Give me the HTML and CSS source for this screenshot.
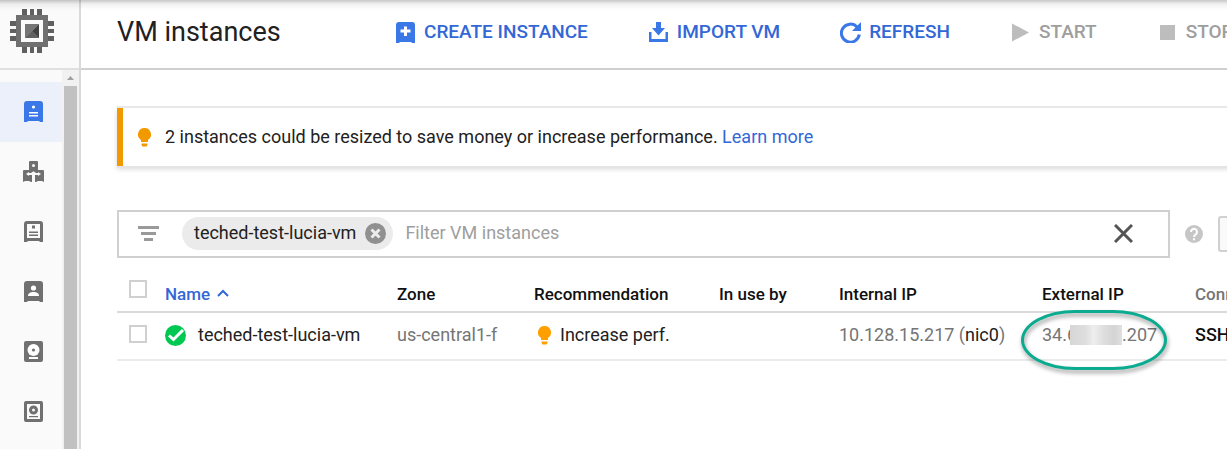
FILE: index.html
```html
<!DOCTYPE html>
<html lang="en">
<head>
<meta charset="utf-8">
<title>VM instances</title>
<link rel="stylesheet" href="styles.css">
</head>
<body>
<div class="app">
  <aside class="sidebar">
    <div class="product">
      <svg width="44" height="44" viewBox="0 0 44 44" shape-rendering="crispEdges">
        <path fill="#606060" d="M12 0h5v6h-5zM20 0h4v6h-4zM27 0h5v6h-5zM12 38h5v6h-5zM20 38h4v6h-4zM27 38h5v6h-5zM0 12h6v5H0zM0 20h6v4H0zM0 27h6v5H0zM38 12h6v5h-6zM38 20h6v4h-6zM38 27h6v5h-6z"/>
        <path fill="#707070" fill-rule="evenodd" d="M6 6h32v32H6zM11 11v22h22V11z"/>
        <path fill="#757575" d="M15 15h14v14H15z"/>
        <path fill="#606060" d="M29 15L15 29h14z"/>
        <path fill="#424242" d="M29 15l-7 7 7 7z"/>
      </svg>
    </div>
    <div class="side-body">
      <nav class="nav" aria-label="Compute Engine">
        <a class="nav-item active" href="#" aria-label="VM instances">
          <svg width="19" height="21" viewBox="0 0 19 21"><path fill="currentColor" d="M3 0h13a3 3 0 0 1 3 3v18h-3l-1-1H4l-1 1H0V3a3 3 0 0 1 3-3z"/><circle cx="9.500" cy="6" r="1.600" fill="#fff"/><path fill="#fff" d="M5 11h9v1.500H5zM5 14h9v1.500H5z"/></svg>
        </a>
        <a class="nav-item" href="#" aria-label="Instance groups">
          <svg width="21" height="21" viewBox="0 0 21 21"><path fill="currentColor" d="M7 0h7a1 1 0 0 1 1 1v8h5a1 1 0 0 1 1 1v11l-2-1h-4l-2 1H8l-2-1H2l-2 1V10a1 1 0 0 1 1-1h5V1a1 1 0 0 1 1-1z"/><circle cx="10.500" cy="4.500" r="1.500" fill="#fafafa"/><path fill="#fafafa" d="M0 8h5v1H0zM16 8h5v1h-5zM3 13l3-2v1h2l2-1.500h1l2 1.500h2v-1l3 2-3 2v-1h-3V21H9v-7H6v1z"/></svg>
        </a>
        <a class="nav-item" href="#" aria-label="Instance templates">
          <svg width="19" height="21" viewBox="0 0 19 21"><path fill="currentColor" fill-rule="evenodd" d="M3 0h13a3 3 0 0 1 3 3v18h-3l-1-1H4l-1 1H0V3a3 3 0 0 1 3-3zM3 3v14h13V3z"/><path fill="currentColor" d="M8 4.500h3v3H8zM5 10.500h9V12H5zM5 13.500h9V15H5z"/></svg>
        </a>
        <a class="nav-item" href="#" aria-label="Sole-tenant nodes">
          <svg width="19" height="21" viewBox="0 0 19 21"><path fill="currentColor" d="M3 0h13a3 3 0 0 1 3 3v18h-3l-1-1H4l-1 1H0V3a3 3 0 0 1 3-3z"/><circle cx="9.500" cy="7" r="2.600" fill="#fff"/><path fill="#fff" d="M4 15c0-3 2.500-4 5.500-4s5.500 1 5.500 4z"/></svg>
        </a>
        <a class="nav-item" href="#" aria-label="Machine images">
          <svg width="19" height="21" viewBox="0 0 19 21"><rect width="19" height="21" rx="2" fill="currentColor"/><circle cx="9.500" cy="9" r="6" fill="#fff"/><circle cx="9.500" cy="9" r="1.600" fill="currentColor"/><path fill="#fff" d="M5 16h9v2H5z"/></svg>
        </a>
        <a class="nav-item" href="#" aria-label="Disks">
          <svg width="19" height="21" viewBox="0 0 19 21"><path fill="currentColor" fill-rule="evenodd" d="M2 0h15a2 2 0 0 1 2 2v17a2 2 0 0 1-2 2H2a2 2 0 0 1-2-2V2a2 2 0 0 1 2-2zM3 3v15h13V3z"/><circle cx="9.500" cy="9" r="3" fill="none" stroke="currentColor" stroke-width="3"/><path fill="currentColor" d="M5 15h9v1.200H5z"/></svg>
        </a>
      </nav>
      <div class="scrollbar">
        <svg width="17" height="16" viewBox="0 0 17 16"><path fill="#a0a0a0" d="M8.500 6L12 10H5z"/></svg>
        <div class="thumb"></div>
      </div>
    </div>
  </aside>

  <main class="main">
    <header class="topbar">
      <h1 class="title">VM instances</h1>
      <div class="actions">
        <button class="action" type="button">
          <svg width="21" height="21" viewBox="0 0 21 21"><path fill="#3b78e7" d="M4 0h13a3 3 0 0 1 3 3v18h-3l-1-1H5l-1 1H1V3a3 3 0 0 1 3-3z"/><path fill="#fff" d="M9 4.500h3v3h3.500v3H12v3.500H9v-3.500H5.500v-3H9z"/></svg>
          CREATE INSTANCE
        </button>
        <button class="action" type="button">
          <svg width="21" height="21" viewBox="0 0 21 21"><path fill="#3b78e7" d="M8 0h5v6h4l-6.500 7.500L4 6h4zM1 10h2.500v7h14v-7H20v10H1z"/></svg>
          IMPORT VM
        </button>
        <button class="action" type="button">
          <svg width="21" height="21" viewBox="0 0 21 21"><path fill="none" stroke="#3b78e7" stroke-width="3" d="M17 5A9 9 0 1 0 19.300 12.500"/><path fill="#3b78e7" d="M21 0v9h-9z"/></svg>
          REFRESH
        </button>
        <button class="action" type="button" disabled>
          <svg width="21" height="21" viewBox="0 0 21 21"><path fill="#bdbdbd" d="M2 1.500l17 9-17 9z"/></svg>
          START
        </button>
        <button class="action" type="button" disabled>
          <svg width="21" height="21" viewBox="0 0 21 21"><path fill="#bdbdbd" d="M3 3h15v15H3z"/></svg>
          STOP
        </button>
      </div>
    </header>

    <div class="content">
      <section class="banner">
        <svg width="13" height="19" viewBox="0 0 13 19"><path fill="#f29900" d="M6.500 0A6.500 6.500 0 0 1 10 12v2H3v-2A6.500 6.500 0 0 1 6.500 0zM3.500 15.500h6V17l-1 1.500h-4l-1-1.500z"/></svg>
        <p>2 instances could be resized to save money or increase performance. <a href="#">Learn more</a></p>
      </section>

      <div class="filter-row">
        <div class="filter">
          <svg class="filter-icon" width="21" height="15" viewBox="0 0 21 15"><path fill="#9a9a9a" d="M0 0h21v3H0zM3 6h15v3H3zM6 12h9v3H6z"/></svg>
          <span class="chip">teched-test-lucia-vm
            <button class="plain" type="button" aria-label="Remove filter">
              <svg width="21" height="21" viewBox="0 0 21 21"><circle cx="10.500" cy="10.500" r="10.500" fill="#909090"/><path stroke="#ececec" stroke-width="3" d="M6.500 6.500l8 8M14.500 6.500l-8 8"/></svg>
            </button>
          </span>
          <input class="filter-input" type="text" placeholder="Filter VM instances" aria-label="Filter VM instances">
          <button class="plain" type="button" aria-label="Clear filters">
            <svg width="19" height="19" viewBox="0 0 19 19"><path stroke="#555" stroke-width="3" d="M1 1l17 17M18 1L1 18"/></svg>
          </button>
        </div>
        <button class="plain" type="button" aria-label="Help">
          <svg width="18" height="18" viewBox="0 0 18 18"><circle cx="9" cy="9" r="9" fill="#c6c6c6"/><path fill="none" stroke="#fff" stroke-width="2" d="M6 7a3 3 0 1 1 4.800 2.300C9.500 10.200 9 10.700 9 12"/><path fill="#fff" d="M8 13.200h2v2H8z"/></svg>
        </button>
        <button class="columns" type="button" aria-label="Columns"></button>
      </div>

      <table class="vms">
        <colgroup><col class="c-check"><col class="c-name"><col class="c-zone"><col class="c-rec"><col class="c-use"><col class="c-int"><col class="c-ext"><col></colgroup>
        <thead>
          <tr>
            <th class="check"><input type="checkbox" aria-label="Select all instances"></th>
            <th class="sorted">Name <svg width="12" height="8" viewBox="0 0 12 8"><path fill="none" stroke="#3367d6" stroke-width="2" d="M1 7l5-5 5 5"/></svg></th>
            <th>Zone</th>
            <th>Recommendation</th>
            <th>In use by</th>
            <th>Internal IP</th>
            <th>External IP</th>
            <th class="muted">Connect</th>
          </tr>
        </thead>
        <tbody>
          <tr>
            <td class="check"><input type="checkbox" aria-label="Select teched-test-lucia-vm"></td>
            <td>
              <div class="name">
                <svg width="21" height="21" viewBox="0 0 21 21"><circle cx="10.500" cy="10.500" r="10.500" fill="#00c853"/><path fill="none" stroke="#fff" stroke-width="3" d="M4 10.500l4.500 4L18 5"/></svg>
                <a href="#">teched-test-lucia-vm</a>
              </div>
            </td>
            <td class="muted">us-central1-f</td>
            <td>
              <div class="rec">
                <svg width="13" height="19" viewBox="0 0 13 19"><path fill="#ffa000" d="M6.500 0A6.500 6.500 0 0 1 10 12v2H3v-2A6.500 6.500 0 0 1 6.500 0zM3.500 15.500h6V17l-1 1.500h-4l-1-1.500z"/></svg>
                <a href="#">Increase perf.</a>
              </div>
            </td>
            <td></td>
            <td class="muted">10.128.15.217 (<a href="#">nic0</a>)</td>
            <td class="external muted"><div class="ip">34.6<span class="redaction"></span>.207</div><div class="ring"></div></td>
            <td class="ssh">SSH</td>
          </tr>
        </tbody>
      </table>
    </div>
  </main>
</div>
</body>
</html>
```

FILE: styles.css
```css
* { box-sizing: border-box; }
body {
  margin: 0;
  background: #fff;
  color: #212121;
  font: 18px/24px Roboto, "Liberation Sans", sans-serif;
}
svg { display: block; flex: none; }
button, input { font: inherit; }
a { color: inherit; text-decoration: none; }

.app {
  position: relative;
  display: flex;
  height: 100vh;
  overflow: hidden;
}
.app::before {
  content: "";
  position: absolute;
  inset: 0 0 auto;
  height: 10px;
  background: linear-gradient(rgba(0, 0, 0, .22), rgba(0, 0, 0, .06) 40%, transparent);
}

/* Sidebar */
.sidebar {
  flex: none;
  width: 81px;
  display: flex;
  flex-direction: column;
  background: #fafafa;
  border-right: 2px solid #d9d9d9;
}
.product {
  height: 70px;
  padding: 9px 10px;
  border-bottom: 2px solid #e0e0e0;
}
.side-body { flex: 1; display: flex; min-height: 0; }
.nav { flex: 1; padding-top: 12px; }
.nav-item {
  display: flex;
  align-items: center;
  justify-content: center;
  height: 60px;
  padding: 0 0 2px 5px;
  color: #707070;
}
.nav-item.active { background: #ecf0fa; color: #3b78e7; }
.scrollbar {
  width: 17px;
  display: flex;
  flex-direction: column;
  background: #f1f1f1;
}
.thumb { flex: 1; margin: 0 2px; background: #c1c1c1; }

/* Header */
.main { flex: 1; min-width: 0; overflow: hidden; }
.topbar {
  display: flex;
  align-items: center;
  height: 70px;
  padding: 0 0 4px 36px;
  border-bottom: 2px solid #d0d0d0;
}
.title {
  flex: none;
  width: 278px;
  margin: 0;
  font-size: 27px;
  line-height: 32px;
  font-weight: 400;
}
.actions { display: flex; gap: 60px; }
.action {
  display: flex;
  align-items: center;
  gap: 8px;
  padding: 0;
  border: 0;
  background: none;
  color: #3367d6;
  font-size: 19px;
  font-weight: 500;
  white-space: nowrap;
}
.action:disabled { color: #9e9e9e; }

/* Content runs on past the right edge of the pane */
.content { padding-left: 36px; margin-right: -60px; }
.banner {
  display: flex;
  align-items: center;
  gap: 14px;
  height: 58px;
  margin: 38px 0 44px;
  padding-left: 15px;
  border-left: 6px solid #f29900;
  box-shadow: 0 -2px 0 #e8e8e8, 0 2px 0 #e4e4e4, 0 3px 5px rgba(0, 0, 0, .16);
}
.banner p { margin: 0; }
.banner a { color: #3367d6; }

.filter-row { display: flex; align-items: center; gap: 15px; }
.filter {
  flex: 1;
  display: flex;
  align-items: center;
  height: 48px;
  padding: 0 35px 2px 19px;
  border: 2px solid #d0d0d0;
}
.filter-icon { margin-right: 23px; }
.chip {
  display: flex;
  align-items: center;
  gap: 9px;
  height: 33px;
  padding: 0 7px 0 12px;
  border-radius: 17px;
  background: #ebebeb;
  white-space: nowrap;
}
.filter-input {
  flex: 1;
  min-width: 0;
  margin-left: 12px;
  padding: 0;
  border: 0;
  outline: 0;
  background: none;
}
.filter-input::placeholder { color: #9e9e9e; }
.plain { padding: 0; border: 0; background: none; }
.columns {
  width: 69px;
  height: 36px;
  border: 2px solid #d0d0d0;
  border-radius: 3px;
  background: #fafafa;
}

/* Table */
.vms {
  width: 100%;
  table-layout: fixed;
  border-collapse: collapse;
}
.c-check { width: 48px; }
.c-name { width: 232px; }
.c-zone { width: 137px; }
.c-rec { width: 185px; }
.c-use { width: 120px; }
.c-int { width: 203px; }
.c-ext { width: 153px; }
.vms th, .vms td { padding: 0; text-align: left; white-space: nowrap; }
.vms th {
  height: 54px;
  padding-top: 18px;
  border-bottom: 2px solid #dadada;
  color: #111;
  font-size: 17px;
  font-weight: 500;
}
.vms td { height: 48px; padding-bottom: 2px; border-bottom: 2px solid #ebebeb; }
.vms th.sorted { color: #3367d6; }
.sorted svg { display: inline-block; margin: 0 0 3px 3px; }
.vms th.muted, .vms td.muted { color: #757575; }
.muted a { color: #212121; }
.vms th.check { padding: 9px 0 0 12px; }
.vms td.check { padding: 0 0 4px 12px; }
.check input {
  display: block;
  appearance: none;
  width: 18px;
  height: 18px;
  margin: 0;
  border: 2px solid #d0d0d0;
  background: #fff;
}
.name { display: flex; align-items: center; gap: 12px; }
.rec { display: flex; align-items: center; gap: 9px; padding-left: 4px; }
.external { position: relative; }
.ip { display: flex; align-items: center; }
.redaction {
  width: 52px;
  height: 20px;
  margin-left: -7px;
  background: linear-gradient(90deg, #d6d6d6, #dedede 30%, #eee 45%, #dedede 65%, #d4d4d4 85%, #e0e0e0);
}
.ring {
  position: absolute;
  left: -21px;
  top: -3px;
  width: 146px;
  height: 60px;
  border: 3px solid #0aab8e;
  border-radius: 54px / 30px;
  filter: drop-shadow(1px 3px 2px rgba(0, 0, 0, .4));
}
.vms td.ssh { color: #111; font-weight: 500; }
```
